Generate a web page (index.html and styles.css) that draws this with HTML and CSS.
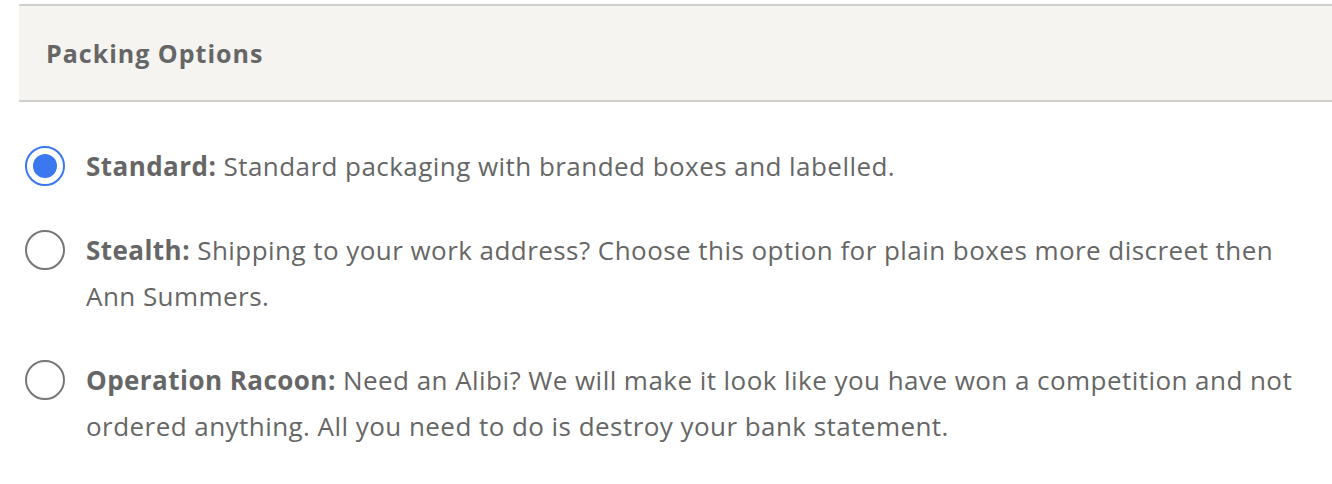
FILE: index.html
```html
<!DOCTYPE html>
<html>
<head>
<meta charset="utf-8">
<link rel="stylesheet" href="styles.css">
</head>
<body>
<div class="page">
  <section class="panel">
    <header class="panel-head">Packing Options</header>
    <div class="options">
      <label class="option">
        <span class="radio checked"><span class="dot"></span></span>
        <span class="text"><b>Standard:</b> Standard packaging with branded boxes and labelled.</span>
      </label>
      <label class="option">
        <span class="radio"></span>
        <span class="text"><b>Stealth:</b> Shipping to your work address? Choose this option for plain boxes more discreet then Ann Summers.</span>
      </label>
      <label class="option">
        <span class="radio"></span>
        <span class="text"><b>Operation Racoon:</b> Need an Alibi? We will make it look like you have won a competition and not ordered anything. All you need to do is destroy your bank statement.</span>
      </label>
    </div>
  </section>
</div>
</body>
</html>
```

FILE: styles.css
```css
html, body {
  margin: 0;
  padding: 0;
  background: #ffffff;
}
body {
  font-family: "Open Sans", "Noto Sans", sans-serif;
  color: #666666;
}
.page {
  padding: 4px 0 0 19px;
}
.panel {
  display: flex;
  flex-direction: column;
}
.panel-head {
  background: #f5f4f1;
  border-top: 2px solid #cfcfcc;
  border-bottom: 2px solid #cfcfcc;
  height: 94px;
  box-sizing: content-box;
  display: flex;
  align-items: center;
  padding-left: 27px;
  font-size: 25px;
  letter-spacing: 1px;
  font-weight: 700;
  color: #666666;
}
.options {
  display: flex;
  flex-direction: column;
  gap: 38px;
  padding: 41px 20px 0 6px;
}
.option {
  display: flex;
  align-items: flex-start;
  gap: 21px;
  font-size: 26px;
  letter-spacing: 0.45px;
  line-height: 46px;
}
.radio {
  flex: none;
  width: 36px;
  height: 36px;
  margin-top: 3px;
  border: 2px solid #777777;
  border-radius: 50%;
  display: flex;
  align-items: center;
  justify-content: center;
  background: #fff;
}
.radio.checked {
  border-color: #3b78f0;
}
.dot {
  width: 24px;
  height: 24px;
  border-radius: 50%;
  background: #3b78f0;
}
.text b {
  font-weight: 700;
}
```
